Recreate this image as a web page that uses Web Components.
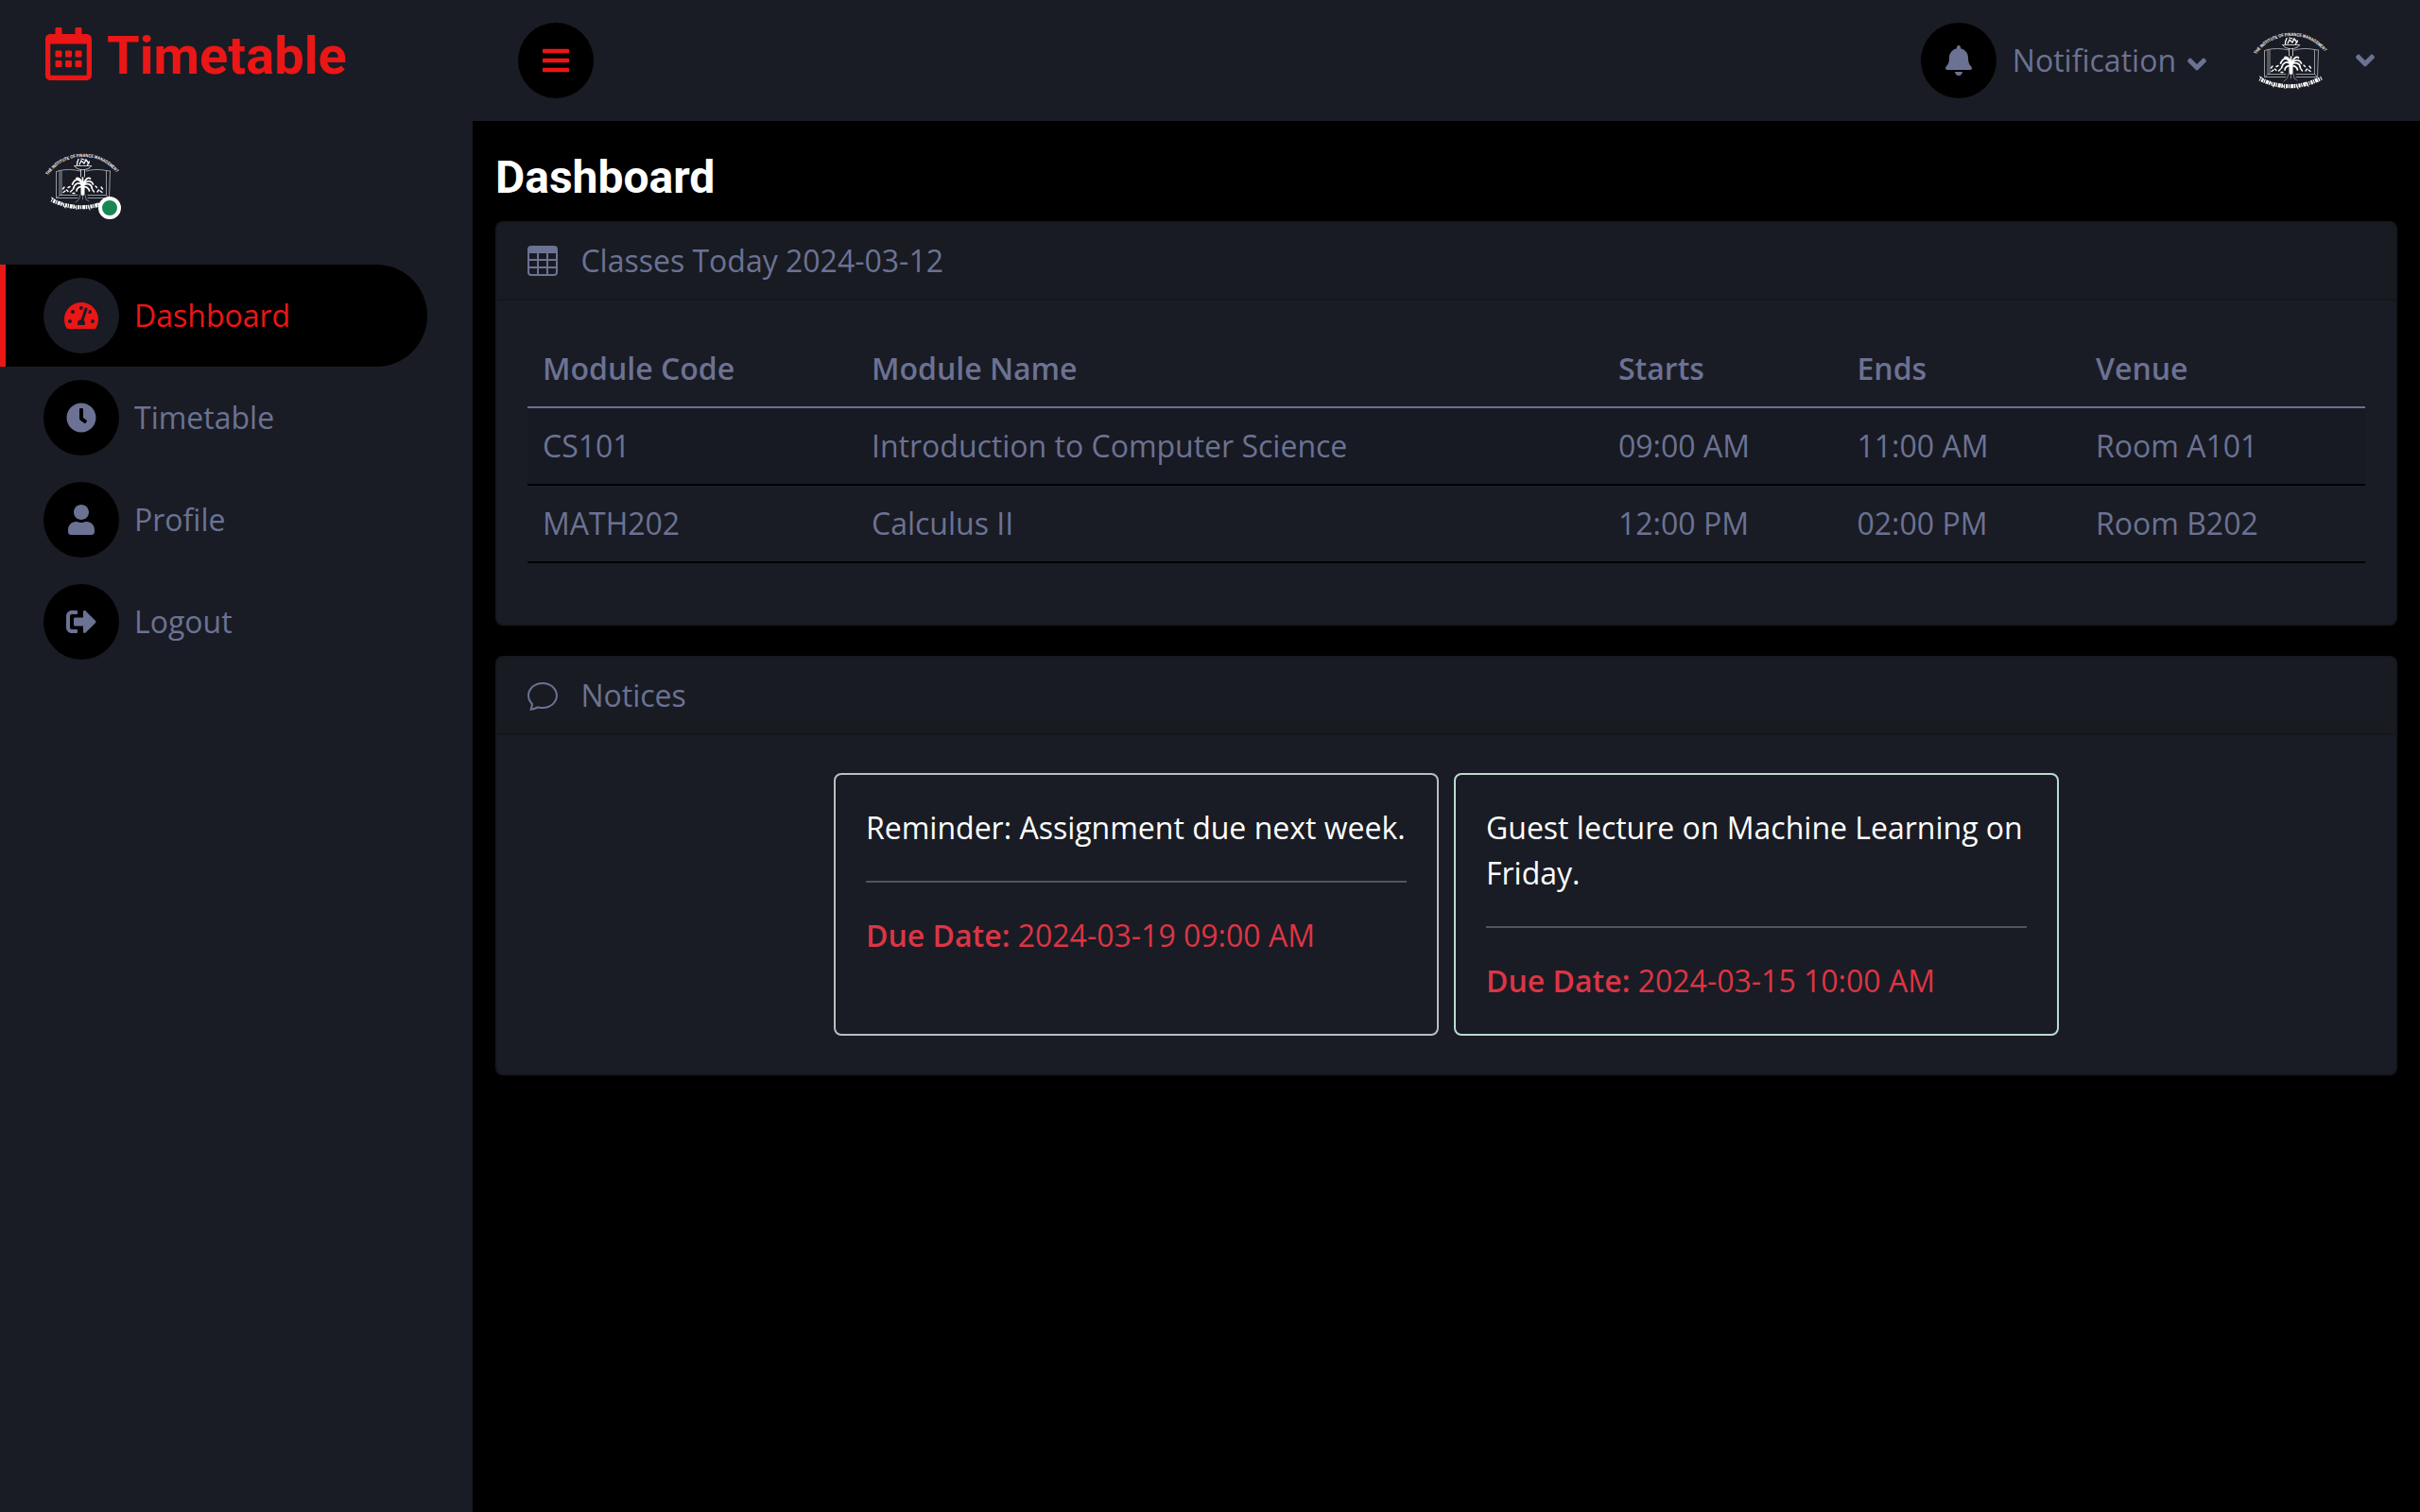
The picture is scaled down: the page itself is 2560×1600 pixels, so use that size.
<!DOCTYPE html>
<html lang="en">
<head>
<meta charset="utf-8">
<title>Timetable</title>
<style>
html,body{margin:0;padding:0;background:#000}
body{font-family:"Open Sans",sans-serif;font-size:32px;line-height:48px;color:#6c7293;width:2560px;height:1600px;overflow:hidden}
</style>
</head>
<body>
<tt-app>
  <tt-sidebar slot="sidebar">
    <tt-nav-item icon="gauge" active>Dashboard</tt-nav-item>
    <tt-nav-item icon="clock">Timetable</tt-nav-item>
    <tt-nav-item icon="user">Profile</tt-nav-item>
    <tt-nav-item icon="logout">Logout</tt-nav-item>
  </tt-sidebar>
  <tt-navbar slot="navbar">Notification</tt-navbar>
  <tt-card icon="table"><span slot="title">Classes Today 2024-03-12</span><tt-classes></tt-classes></tt-card>
  <tt-card icon="chat"><span slot="title">Notices</span>
    <tt-notice-list>
      <tt-notice due="2024-03-19 09:00 AM" style="--edge:#bcbebf">Reminder: Assignment due next week.</tt-notice>
      <tt-notice due="2024-03-15 10:00 AM" style="--edge:#badbcc">Guest lecture on Machine Learning on Friday.</tt-notice>
    </tt-notice-list>
  </tt-card>
</tt-app>
<script>
const ICONS = {
  calendar:[448,512,'M148 288h-40c-6.6 0-12-5.4-12-12v-40c0-6.6 5.4-12 12-12h40c6.6 0 12 5.4 12 12v40c0 6.6-5.4 12-12 12zm108-12v-40c0-6.6-5.4-12-12-12h-40c-6.6 0-12 5.4-12 12v40c0 6.6 5.4 12 12 12h40c6.6 0 12-5.4 12-12zm96 0v-40c0-6.6-5.4-12-12-12h-40c-6.6 0-12 5.4-12 12v40c0 6.6 5.4 12 12 12h40c6.6 0 12-5.4 12-12zm-96 96v-40c0-6.6-5.4-12-12-12h-40c-6.6 0-12 5.4-12 12v40c0 6.6 5.4 12 12 12h40c6.6 0 12-5.4 12-12zm-96 0v-40c0-6.6-5.4-12-12-12h-40c-6.6 0-12 5.4-12 12v40c0 6.6 5.4 12 12 12h40c6.6 0 12-5.4 12-12zm192 0v-40c0-6.6-5.4-12-12-12h-40c-6.6 0-12 5.4-12 12v40c0 6.6 5.4 12 12 12h40c6.6 0 12-5.4 12-12zm96-260v352c0 26.5-21.5 48-48 48H48c-26.5 0-48-21.5-48-48V112c0-26.5 21.5-48 48-48h48V12c0-6.6 5.4-12 12-12h40c6.6 0 12 5.4 12 12v52h128V12c0-6.6 5.4-12 12-12h40c6.6 0 12 5.4 12 12v52h48c26.5 0 48 21.5 48 48zm-48 346V160H48v298c0 3.3 2.7 6 6 6h340c3.3 0 6-2.7 6-6z'],
  bars:[448,512,'M16 132h416c8.837 0 16-7.163 16-16V76c0-8.837-7.163-16-16-16H16C7.163 60 0 67.163 0 76v40c0 8.837 7.163 16 16 16zm0 160h416c8.837 0 16-7.163 16-16v-40c0-8.837-7.163-16-16-16H16c-8.837 0-16 7.163-16 16v40c0 8.837 7.163 16 16 16zm0 160h416c8.837 0 16-7.163 16-16v-40c0-8.837-7.163-16-16-16H16c-8.837 0-16 7.163-16 16v40c0 8.837 7.163 16 16 16z'],
  gauge:[576,512,'M288 32C128.94 32 0 160.94 0 320c0 52.8 14.25 102.26 39.06 144.8 5.61 9.62 16.3 15.2 27.44 15.2h443c11.14 0 21.83-5.58 27.44-15.2C561.75 422.26 576 372.8 576 320c0-159.06-128.94-288-288-288zm0 64c14.71 0 26.58 10.13 30.32 23.65-1.11 2.26-2.64 4.23-3.45 6.67l-9.22 27.67c-5.13 3.49-10.97 6.01-17.64 6.01-17.67 0-32-14.33-32-32S270.33 96 288 96zM96 384c-17.67 0-32-14.33-32-32s14.33-32 32-32 32 14.33 32 32-14.33 32-32 32zm48-160c-17.67 0-32-14.33-32-32s14.33-32 32-32 32 14.33 32 32-14.33 32-32 32zm246.77-72.41l-61.33 184C343.13 347.33 352 364.54 352 384c0 11.72-3.38 22.55-8.88 32H232.88c-5.5-9.45-8.88-20.28-8.88-32 0-33.94 26.5-61.43 59.9-63.59l61.34-184.01c4.17-12.56 17.73-19.45 30.36-15.17 12.57 4.19 19.35 17.79 15.17 30.36zm14.66 57.2l15.52-46.55c3.47-1.29 7.13-2.23 11.05-2.23 17.67 0 32 14.33 32 32s-14.33 32-32 32c-11.38-.01-20.89-6.28-26.57-15.22zM480 384c-17.67 0-32-14.33-32-32s14.33-32 32-32 32 14.33 32 32-14.33 32-32 32z'],
  clock:[512,512,'M256,8C119,8,8,119,8,256S119,504,256,504,504,393,504,256,393,8,256,8Zm92.49,313h0l-20,25a16,16,0,0,1-22.49,2.5h0l-67-49.72a40,40,0,0,1-15-31.23V112a16,16,0,0,1,16-16h32a16,16,0,0,1,16,16V256l58,42.5A16,16,0,0,1,348.49,321Z'],
  user:[448,512,'M224 256c70.7 0 128-57.3 128-128S294.7 0 224 0 96 57.3 96 128s57.3 128 128 128zm89.6 32h-16.7c-22.2 10.2-46.9 16-72.9 16s-50.6-5.8-72.9-16h-16.7C60.2 288 0 348.2 0 422.4V464c0 26.5 21.5 48 48 48h352c26.5 0 48-21.5 48-48v-41.6c0-74.2-60.2-134.4-134.4-134.4z'],
  logout:[512,512,'M497 273L329 441c-15 15-41 4.5-41-17v-96H152c-13.3 0-24-10.7-24-24v-96c0-13.3 10.7-24 24-24h136V88c0-21.4 25.9-32 41-17l168 168c9.3 9.4 9.3 24.6 0 34zM192 436v-40c0-6.6-5.4-12-12-12H96c-17.7 0-32-14.3-32-32V160c0-17.7 14.3-32 32-32h84c6.6 0 12-5.4 12-12V76c0-6.6-5.4-12-12-12H96c-53 0-96 43-96 96v192c0 53 43 96 96 96h84c6.6 0 12-5.4 12-12z'],
  bell:[448,512,'M224 512c35.32 0 63.97-28.65 63.97-64H160.03c0 35.35 28.65 64 63.97 64zm215.39-149.71c-19.32-20.76-55.47-51.99-55.47-154.29 0-77.7-54.48-139.9-127.94-155.16V32c0-17.67-14.32-32-31.98-32s-31.98 14.33-31.98 32v20.84C118.56 68.1 64.08 130.3 64.08 208c0 102.3-36.15 133.53-55.47 154.29-6 6.45-8.66 14.16-8.61 21.71.11 16.4 12.98 32 32.1 32h383.8c19.12 0 32-15.6 32.1-32 .05-7.55-2.61-15.27-8.61-21.71z'],
  angle:[320,512,'M143 352.3L7 216.3c-9.4-9.4-9.4-24.6 0-33.9l22.6-22.6c9.4-9.4 24.6-9.4 33.9 0l96.4 96.4 96.4-96.4c9.4-9.4 24.6-9.4 33.9 0l22.6 22.6c9.4 9.4 9.4 24.6 0 33.9l-136 136c-9.2 9.4-24.4 9.4-33.8 0z'],
  table:[16,16,'M0 2a2 2 0 0 1 2-2h12a2 2 0 0 1 2 2v12a2 2 0 0 1-2 2H2a2 2 0 0 1-2-2V2zm15 2h-4v3h4V4zm0 4h-4v3h4V8zm0 4h-4v3h3a1 1 0 0 0 1-1v-2zm-5 3v-3H6v3h4zm-5 0v-3H1v2a1 1 0 0 0 1 1h3zm-4-4h4V8H1v3zm0-4h4V4H1v3zm5-3v3h4V4H6zm4 4H6v3h4V8z'],
  chat:[16,16,'M2.678 11.894a1 1 0 0 1 .287.801 10.97 10.97 0 0 1-.398 2c1.395-.323 2.247-.697 2.634-.893a1 1 0 0 1 .71-.074A8.06 8.06 0 0 0 8 14c3.996 0 7-2.807 7-6 0-3.192-3.004-6-7-6S1 4.808 1 8c0 1.468.617 2.83 1.678 3.894zm-.493 3.905a21.682 21.682 0 0 1-.713.129c-.2.032-.352-.176-.273-.362a9.68 9.68 0 0 0 .244-.637l.003-.01c.248-.72.45-1.548.524-2.319C.743 11.37 0 9.76 0 8c0-3.866 3.582-7 8-7s8 3.134 8 7-3.582 7-8 7a9.06 9.06 0 0 1-2.347-.306c-.52.263-1.639.742-3.468 1.105z']
};
function define(name, render){
  customElements.define(name, class extends HTMLElement{
    connectedCallback(){
      if(this.shadowRoot) return;
      this.attachShadow({mode:'open'}).innerHTML = render(this);
    }
  });
}

define('tt-icon', el => {
  const [w,h,d] = ICONS[el.getAttribute('name')];
  const s = +(el.getAttribute('size') || 32);
  return `<style>:host{display:block;flex:none}svg{display:block;fill:currentColor}</style>
  <svg width="${s*w/h}" height="${s}" viewBox="0 0 ${w} ${h}"><path d="${d}"/></svg>`;
});

define('tt-disc', el => `<style>
  :host{display:flex;flex:none;align-items:center;justify-content:center;width:80px;height:80px;border-radius:50%;background:var(--disc,#000)}
  </style><tt-icon name="${el.getAttribute('icon')}"></tt-icon>`);

/* College crest: arched title, oil lamp, open book and palm, scroll underneath */
define('tt-crest', () => `<style>:host{display:block;flex:none;width:80px;height:80px}svg{display:block}
  text{font:700 4.7px "Liberation Sans",sans-serif;fill:#fff;stroke:none}</style>
  <svg width="80" height="80" viewBox="0 0 80 80" fill="none" stroke="#fff" stroke-linecap="round">
    <defs><path id="arc" d="M2.600 33.500A45.500 45.500 0 0 1 77.400 33.500"/></defs>
    <text textLength="84" lengthAdjust="spacingAndGlyphs"><textPath href="#arc">THE INSTITUTE OF FINANCE MANAGEMENT</textPath></text>
    <g stroke="#b4b6bc" stroke-width=".8">
      <path d="M11.5 29.500V57.500H34M12 29.500L15 28.500V54.500H34M15 28.500C22 27 29 27 37 29M17 29V54M68.500 29L67.500 57.500H45M68 29L64.500 28.500V54.500H45M64.500 28.500C58 27 50 27 43 29M12 57.500L15 54.500M67.500 57.500L64.500 54.500"/>
    </g>
    <g stroke-width=".9">
      <path d="M30.500 23.500H48.500M31 24C34 29 45 29 48.500 24M37.500 28V35M41.500 28V35" stroke="#d5d6da"/>
      <path d="M33.500 22.500C33 19 35 18 35 16.500M36 22L38 18L41 21L43 17L46 21M38 16L41 17M44.500 22.500L46.500 19" stroke-width="1.300"/>
    </g>
    <g stroke-width="1.700">
      <path d="M39.500 44C36 37 32 36 28.500 43M39.500 44C35 40 31 42 29.500 48M39.500 44C38 38 36 36 33 36.500M39.500 44C42 38 45 35 47.500 37M39.500 44C44 38 49 39 50.500 43M39.500 44C45 41 49 43 49.500 48M39.500 44V36M39.500 46C36 45 33 47 33 50M39.500 46C43 45 46 47 46.500 50"/>
      <path d="M39.500 43V53" stroke-width="4"/>
      <path d="M37 54L35.500 59L32 62M39.500 54V59M42 54L43 59L46 61" stroke-width=".7" stroke="#9da0a8"/>
      <path d="M18.500 48L20 46M19 51.500L21 50M22.500 49L24 50.500M24 46.500L26 45.500M26.500 51L28.500 49M29 52.500H31M60.500 48L59 46M60 51.500L58 50M56.500 49L55 51M54.500 46.500L53 45M51.500 51L50 49" stroke-width="1.400"/>
    </g>
    <path d="M6.500 59.500Q39 75.500 72 58.500" stroke-width="4.200" stroke-linecap="butt" stroke-dasharray="1 1 2.200 .7 1.200 .9 3 .6 1.600 1.200"/>
    <path d="M6.500 57L9 58.500M18 63L21 68M30 65L33 69.500M45 65.500L47 70M55 63L58 67.500M65 59L68 62.500" stroke-width="1"/>
  </svg>`);

define('tt-nav-item', el => `<style>
  :host{display:flex;align-items:center;gap:16px;box-sizing:border-box;height:108px;width:452px;padding-left:40px;border-left:6px solid #191c24;border-radius:0 54px 54px 0}
  :host([active]){background:#000;border-left-color:#eb1616;color:#eb1616;--disc:#191c24}
  </style><tt-disc icon="${el.getAttribute('icon')}"></tt-disc><span><slot></slot></span>`);

define('tt-sidebar', () => `<style>
  :host{display:block;width:500px;height:1600px;background:#191c24}
  .brand{display:flex;align-items:center;gap:16px;padding:26px 0 0 48px;color:#eb1616;font:700 56px/66px Roboto,sans-serif}
  .brand tt-icon{margin-bottom:4px}
  .who{position:relative;width:80px;height:80px;margin:60px 0 48px 48px}
  .dot{position:absolute;right:0;bottom:0;box-sizing:border-box;width:24px;height:24px;border:4px solid #fff;border-radius:50%;background:#198754}
  </style>
  <div class="brand"><tt-icon name="calendar" size="56"></tt-icon><span>Timetable</span></div>
  <div class="who"><tt-crest></tt-crest><i class="dot"></i></div>
  <nav><slot></slot></nav>`);

define('tt-navbar', () => `<style>
  :host{display:flex;align-items:center;box-sizing:border-box;height:128px;padding:0 48px;background:#191c24}
  .menu{color:#eb1616;margin-right:auto}
  .label{margin:0 0 0 16.500px}
  .a1{margin:8px 50px 0 12px}
  .a2{margin:0 0 0 28px}
  </style>
  <tt-disc class="menu" icon="bars"></tt-disc>
  <tt-disc icon="bell"></tt-disc><span class="label"><slot></slot></span><tt-icon class="a1" name="angle"></tt-icon>
  <tt-crest></tt-crest><tt-icon class="a2" name="angle"></tt-icon>`);

define('tt-card', el => `<style>
  :host{display:block;box-sizing:border-box;border:2px solid rgba(0,0,0,.125);border-radius:8px;background:#191c24}
  header{display:flex;gap:24.400px;height:48px;padding:16px 32px;border-bottom:2px solid rgba(0,0,0,.125);background:rgba(0,0,0,.03)}
  tt-icon{margin-top:8px}
  .body{padding:32px}
  </style>
  <header><tt-icon name="${el.getAttribute('icon')}"></tt-icon><slot name="title"></slot></header>
  <div class="body"><slot></slot></div>`);

const CLASSES = [
  ['CS101','Introduction to Computer Science','09:00 AM','11:00 AM','Room A101'],
  ['MATH202','Calculus II','12:00 PM','02:00 PM','Room B202']
];
define('tt-classes', () => `<style>
  :host{display:block;padding-bottom:32px}
  table{width:100%;table-layout:fixed;border-collapse:separate;border-spacing:0}
  th,td{padding:16px;height:48px;text-align:left;border-bottom:2px solid #000}
  th{font-weight:600;border-bottom-color:#6c7293}
  tbody tr:nth-child(odd){background:rgba(0,0,0,.05)}
  </style>
  <table><colgroup><col style="width:348px"><col style="width:790px"><col style="width:252.500px"><col style="width:252.500px"><col></colgroup>
  <thead><tr><th>Module Code</th><th>Module Name</th><th>Starts</th><th>Ends</th><th>Venue</th></tr></thead>
  <tbody>${CLASSES.map(r => `<tr>${r.map(c => `<td>${c}</td>`).join('')}</tr>`).join('')}</tbody></table>`);

define('tt-notice-list', () => `<style>:host{display:flex;justify-content:center;gap:16px;padding:8px 0}</style><slot></slot>`);

define('tt-notice', el => `<style>
  :host{display:block;box-sizing:border-box;width:640px;padding:32px;border:2px solid var(--edge);border-radius:8px;color:#fff}
  hr{height:2px;margin:32px 0;border:0;background:#fff;opacity:.25}
  .due{color:#dc3545}
  b{font-weight:600}
  </style>
  <div><slot></slot></div><hr><div class="due"><b>Due Date:</b> ${el.getAttribute('due')}</div>`);

define('tt-app', () => `<style>
  :host{display:flex;width:2560px;height:1600px;background:#000}
  .main{flex:1}
  .content{display:flex;flex-direction:column;gap:32px;padding:31px 24px 0}
  h1{margin:0 0 -15px;color:#fff;font:700 48px/58px Roboto,sans-serif}
  </style>
  <slot name="sidebar"></slot>
  <div class="main"><slot name="navbar"></slot>
    <div class="content"><h1>Dashboard</h1><slot></slot></div></div>`);
</script>
</body>
</html>
